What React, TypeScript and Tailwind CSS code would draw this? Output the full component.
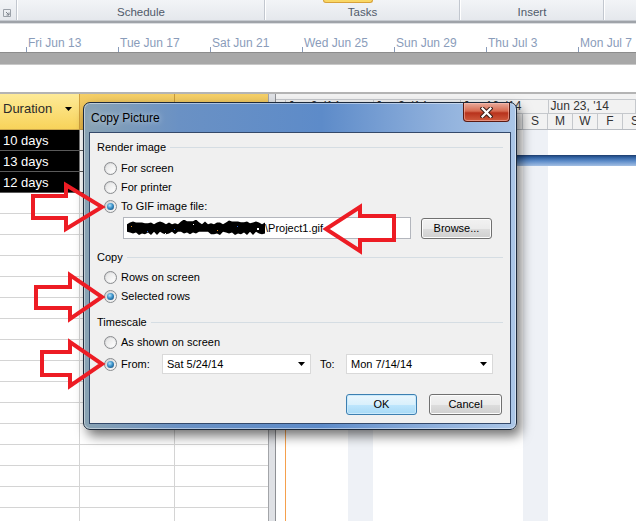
import React from "react";

const FONT = "font-['Liberation_Sans',Arial,sans-serif]";

function Radio({ checked }: { checked?: boolean }) {
  return (
    <span className="flex h-[13px] w-[13px] shrink-0 items-center justify-center rounded-full border border-[#8a8c8f] bg-[linear-gradient(135deg,#cfd0d2,#fbfbfb)]">
      {checked ? (
        <span className="h-[7px] w-[7px] rounded-full bg-[radial-gradient(circle_at_40%_35%,#b4e4fa_0%,#3a90c8_45%,#0c3c66_100%)]" />
      ) : (
        <span className="h-[9px] w-[9px] rounded-full bg-[linear-gradient(135deg,#e3e3e3,#ffffff)]" />
      )}
    </span>
  );
}

function RadioRow({ label, checked }: { label: string; checked?: boolean }) {
  return (
    <div className="flex h-[19px] items-center gap-[4px] pl-[14px]">
      <Radio checked={checked} />
      <span className="text-[11px] leading-none text-black">{label}</span>
    </div>
  );
}

function GroupHeader({ label, className }: { label: string; className: string }) {
  return (
    <div className={"flex h-[14px] items-center gap-[4px] px-[7px] " + className}>
      <span className="text-[11px] leading-none text-black">{label}</span>
      <span className="h-px flex-1 bg-[#d5dde3]" />
    </div>
  );
}

function DownTri() {
  return (
    <svg width="7" height="4" viewBox="0 0 7 4">
      <path d="M0 0H7L3.5 4Z" fill="#000" />
    </svg>
  );
}

function Combo({ value, className }: { value: string; className: string }) {
  return (
    <div className={"flex h-[20px] items-center justify-between border border-[#d9d9d9] bg-white pl-[4px] pr-[5px] " + className}>
      <span className="text-[11px] leading-none text-black">{value}</span>
      <DownTri />
    </div>
  );
}

function Scribble() {
  const top: string[] = [];
  const bot: string[] = [];
  const seed = [3, 1, 4, 1, 5, 9, 2, 6, 5, 3, 5, 8, 9, 7, 9, 3, 2, 3, 8, 4, 6, 2, 6, 4, 3, 3, 8, 3, 2, 7, 9, 5];
  for (let i = 0; i <= 138; i += 3) {
    const s = seed[(i / 3) % seed.length];
    const bump = i > 55 && i < 75 ? -2 : i > 100 && i < 125 ? -1 : 0;
    top.push(i + "," + (1.5 + (s % 4) * 0.9 + bump).toFixed(1));
    bot.push(i + "," + (15 - ((s * 3) % 5) * 0.8).toFixed(1));
  }
  const poly = top.concat(bot.reverse()).join(" ");
  return (
    <svg width="138" height="17" viewBox="0 0 138 17" className="shrink-0">
      <polygon points={poly} fill="#000" />
      <rect x="4" y="6" width="1" height="1" fill="#e08a1e" />
      <rect x="20" y="11" width="1" height="1" fill="#2a62d0" />
      <rect x="47" y="9" width="1" height="1" fill="#2a62d0" />
      <rect x="66" y="4" width="1" height="1" fill="#ffffff" />
      <rect x="90" y="10" width="1" height="1" fill="#e08a1e" />
      <rect x="110" y="6" width="1" height="1" fill="#2a62d0" />
      <rect x="130" y="8" width="2" height="2" fill="#ffffff" />
      <rect x="38" y="13" width="1" height="1" fill="#ffffff" />
    </svg>
  );
}

function WinButton({ label, primary, className }: { label: string; primary?: boolean; className: string }) {
  return (
    <div
      className={
        "flex h-[21px] items-center justify-center rounded-[3px] border text-[11px] leading-none text-black " +
        (primary
          ? "border-[#3c7fb1] bg-[linear-gradient(#eaf6fd_0%,#d9f0fc_50%,#bee6fd_51%,#a7d9f5_100%)] shadow-[inset_0_0_0_1px_#c9e9fb] "
          : "border-[#707070] bg-[linear-gradient(#f2f2f2_0%,#ebebeb_50%,#dddddd_51%,#cfcfcf_100%)] shadow-[inset_0_0_0_1px_#fcfcfc] ") +
        className
      }
    >
      {label}
    </div>
  );
}

function Arrows() {
  const c = "#ed1c24";
  return (
    <svg className="pointer-events-none absolute left-0 top-0" width="636" height="521" viewBox="0 0 636 521">
      <g fill="none" stroke={c} strokeWidth="4" strokeLinejoin="miter">
        <polygon points="33,196 66,196 66,185 102,207 66,229 66,218 33,218" />
        <polygon points="394,216 360,216 360,207 326,229 360,251 360,240 394,240" />
        <polygon points="36,287 70,287 70,275 102,297 70,319 70,308 36,308" />
        <polygon points="42,352 70,352 70,342 102,364 70,386 70,375 42,375" />
      </g>
    </svg>
  );
}

function Dialog() {
  return (
    <div className="absolute left-[83px] top-[102px] flex h-[328px] w-[434px] flex-col rounded-[7px] border border-[#1d2a3c] bg-[linear-gradient(90deg,#8aa3b3_0%,#6a91c4_22%,#5d8bc9_55%,#8fb0dc_82%,#abc6e7_100%)] px-[5px] pb-[5px] shadow-[4px_6px_12px_rgba(0,0,0,0.55),inset_0_0_0_1px_rgba(255,255,255,0.45)]">
      <div className="flex h-[29px] shrink-0 items-start">
        <span className="self-center pl-[2px] text-[12px] leading-none text-black [text-shadow:0_0_6px_rgba(255,255,255,0.7)]">Copy Picture</span>
        <div className="ml-auto mr-[1px] flex h-[19px] w-[47px] items-center justify-center rounded-b-[4px] border border-t-0 border-[#5a1a12] bg-[linear-gradient(#e9ab9c_0%,#d66a50_45%,#b8321c_55%,#cf5b3e_100%)] shadow-[inset_0_0_0_1px_rgba(255,200,190,0.5)]">
          <svg width="13" height="11" viewBox="0 0 13 11">
            <path d="M2.5 1.5L10.5 9.5M10.5 1.5L2.5 9.5" stroke="#3a1e18" strokeWidth="4.2" strokeLinecap="square" />
            <path d="M2.5 1.5L10.5 9.5M10.5 1.5L2.5 9.5" stroke="#ffffff" strokeWidth="2.2" strokeLinecap="square" />
          </svg>
        </div>
      </div>
      <div className="flex flex-1 flex-col border border-[#34496a] bg-[#f0f0f0]">
        <GroupHeader label="Render image" className="mt-[7px]" />
        <div className="mt-[5px]">
          <RadioRow label="For screen" />
          <RadioRow label="For printer" />
          <RadioRow label="To GIF image file:" checked />
        </div>
        <div className="mt-[1px] flex h-[22px] items-center pl-[33px]">
          <div className="flex h-[22px] w-[288px] items-center border border-[#b3b6bd] bg-white pl-[3px]">
            <Scribble />
            <span className="text-[11px] leading-none text-black">\Project1.gif</span>
          </div>
          <WinButton label="Browse..." className="ml-[10px] h-[20px] w-[71px]" />
        </div>
        <GroupHeader label="Copy" className="mt-[11px]" />
        <div className="mt-[4px]">
          <RadioRow label="Rows on screen" />
          <RadioRow label="Selected rows" checked />
        </div>
        <GroupHeader label="Timescale" className="mt-[9px]" />
        <div className="mt-[4px]">
          <RadioRow label="As shown on screen" />
        </div>
        <div className="mt-[2px] flex h-[20px] items-center pl-[14px]">
          <Radio checked />
          <span className="ml-[4px] w-[41px] text-[11px] leading-none text-black">From:</span>
          <Combo value="Sat 5/24/14" className="w-[149px]" />
          <span className="ml-[9px] w-[26px] text-[11px] leading-none text-black">To:</span>
          <Combo value="Mon 7/14/14" className="w-[147px]" />
        </div>
        <div className="mt-[20px] flex justify-end gap-[12px] pr-[8px]">
          <WinButton label="OK" primary className="w-[71px]" />
          <WinButton label="Cancel" className="w-[73px]" />
        </div>
      </div>
    </div>
  );
}

const ticks = ["Fri Jun 13", "Tue Jun 17", "Sat Jun 21", "Wed Jun 25", "Sun Jun 29", "Thu Jul 3", "Mon Jul 7"];
const days = ["T", "T", "S", "F", "W", "M", "S", "T", "T", "S", "M", "W", "F", "S"];
const weeks = ["Jun 2, '14", "Jun 9, '14", "Jun 16, '14", "Jun 23, '14"];

export default function App() {
  const rows = Array.from({ length: 19 }, (_, i) => i);
  const durations = ["10 days", "13 days", "12 days"];
  return (
    <div className={"relative h-[521px] w-[636px] overflow-hidden bg-white " + FONT}>
      {/* Ribbon */}
      <div className="flex h-[20px] bg-[linear-gradient(#f2f4f7,#e5e8ed)] text-[11.5px] text-[#505a6a]">
        <div className="flex w-[16px] items-end pb-[3px] pl-[3px]">
          <svg width="8" height="8" viewBox="0 0 8 8">
            <path d="M0.5 0.5H7.5V7.5H0.5Z" fill="none" stroke="#9aa0a8" />
            <path d="M3 3L6 6M6 3.5V6H3.5" fill="none" stroke="#7a808a" />
          </svg>
        </div>
        <div className="w-[2px] border-l border-r border-l-[#c2c7cf] border-r-[#ffffff]" />
        <div className="flex w-[246px] justify-center pt-[5px] leading-[14px]">Schedule</div>
        <div className="w-[2px] border-l border-r border-l-[#c2c7cf] border-r-[#ffffff]" />
        <div className="relative flex w-[193px] justify-center pt-[5px] leading-[14px]">
          <div className="absolute left-[57px] top-0 h-[3px] w-[50px] rounded-b-[3px] border border-t-0 border-[#d8a23a] bg-[#f9d766]" />
          Tasks
        </div>
        <div className="w-[2px] border-l border-r border-l-[#c2c7cf] border-r-[#ffffff]" />
        <div className="flex w-[142px] justify-center pt-[5px] leading-[14px]">Insert</div>
        <div className="w-[2px] border-l border-r border-l-[#c2c7cf] border-r-[#ffffff]" />
        <div className="flex-1" />
      </div>
      <div className="h-px bg-[#c6cad0]" />
      <div className="h-[2px] bg-[#9fa3a9]" />
      <div className="h-px bg-[#dcdee1]" />
      {/* Timeline */}
      <div className="flex h-[28px] pl-[26px]">
        {ticks.map((t) => (
          <div key={t} className="flex w-[92px] shrink-0 flex-col">
            <span className="mt-[13px] whitespace-nowrap pl-[2px] text-[12px] leading-[13px] text-[#8a9cba]">{t}</span>
            <span className="mt-[-3px] h-[5px] w-px bg-[#8a9cba]" />
          </div>
        ))}
      </div>
      <div className="h-[13px] border-b border-t border-b-[#c8c8c8] border-t-[#8c8c8c] bg-[#a8a8a8]" />
      <div className="h-[27px]" />
      <div className="h-[2px] bg-[#b4b4b4]" />
      {/* Main */}
      <div className="flex h-[427px] overflow-hidden">
        <div className="flex w-[268px] shrink-0 flex-col">
          <div className="flex h-[36px] shrink-0 border-b border-[#c9a44c]">
            <div className="flex w-[80px] items-start justify-between border-r border-[#d2a13e] bg-[linear-gradient(#fdea98,#f8d35a)] pl-[3px] pr-[7px] pt-[7px]">
              <span className="text-[13px] leading-[15px] text-[#2a2a2a]">Duration</span>
              <span className="mt-[6px]">
                <DownTri />
              </span>
            </div>
            <div className="w-[95px] border-r border-[#c99a38] bg-[linear-gradient(#f4cf68,#ebb846)]" />
            <div className="flex-1 bg-[linear-gradient(#f4cf68,#ebb846)]" />
          </div>
          {rows.map((i) => (
            <div key={i} className={"flex h-[21px] shrink-0 border-b " + (i < 3 ? "border-[#5a5a5a]" : "border-[#d4d4d4]")}>
              <div
                className={
                  "flex w-[80px] items-center border-r pl-[3px] text-[13px] leading-none " +
                  (i < 3 ? "border-[#7a7a7a] bg-black text-white" : "border-[#d4d4d4]")
                }
              >
                {i < 3 ? durations[i] : ""}
              </div>
              <div className="w-[95px] border-r border-[#d4d4d4]" />
              <div className="flex-1" />
            </div>
          ))}
        </div>
        <div className="w-[8px] shrink-0 border-l border-r border-l-[#a3a5a9] border-r-[#8e9094] bg-[#dfe1e5]" />
        <div className="flex min-w-0 flex-1 flex-col overflow-hidden">
          <div className="flex h-[36px] shrink-0 flex-col border-b border-[#b8bcc2] bg-[#f2f2f2] text-[12px] leading-[13px] text-[#333]">
            <div className="h-[6px] border-b border-[#c5c8cc]" />
            <div className="flex h-[14px] border-b border-[#c5c8cc]">
              <div className="w-[10px] shrink-0 border-r border-[#c5c8cc]" />
              {weeks.map((w) => (
                <div key={w} className="w-[87.5px] shrink-0 whitespace-nowrap border-r border-[#c5c8cc] pl-[2px]">
                  {w}
                </div>
              ))}
            </div>
            <div className="flex h-[15px]">
              <div className="w-[22px] shrink-0 border-r border-[#c5c8cc]" />
              {days.map((d, i) => (
                <div key={i} className="flex w-[25px] shrink-0 justify-center border-r border-[#c5c8cc] pt-[1px]">
                  {d}
                </div>
              ))}
            </div>
          </div>
          <div className="relative flex-1">
            <div className="absolute bottom-0 left-[72px] top-0 w-[25px] bg-[#eef1f6]" />
            <div className="absolute bottom-0 left-[247px] top-0 w-[25px] bg-[#eef1f6]" />
            <div className="absolute bottom-0 left-[9px] top-0 w-px bg-[#f5a04d]" />
            <div className="absolute left-[20px] right-0 top-[25px] h-[11px] bg-[linear-gradient(#1d3c6c_0%,#2f5f9f_20%,#5d8cc9_55%,#a3bfe4_100%)]" />
          </div>
        </div>
      </div>
      <Dialog />
      <Arrows />
    </div>
  );
}
